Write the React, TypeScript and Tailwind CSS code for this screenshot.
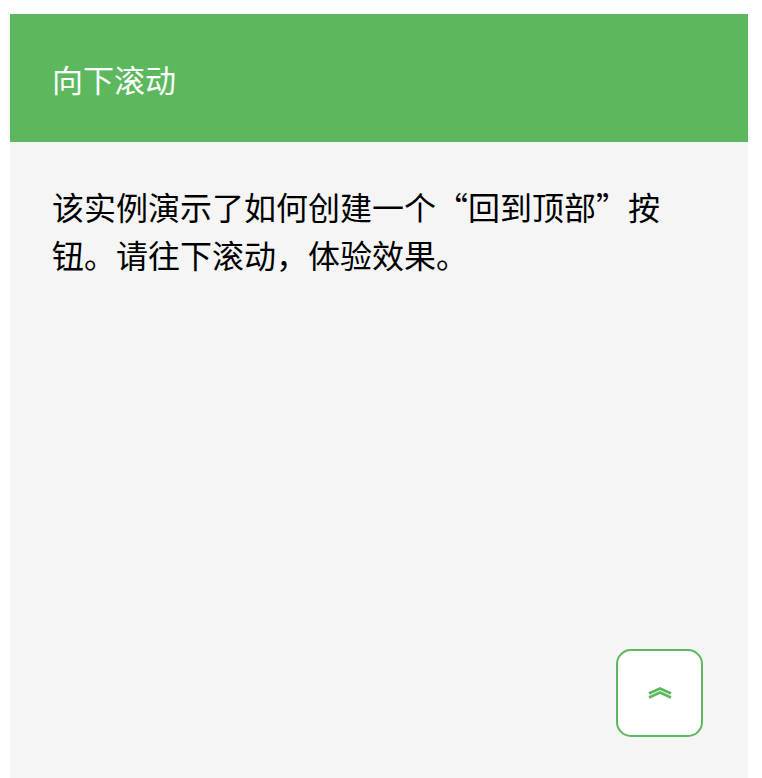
const cjk = {
  fontFamily: '"Noto Sans CJK SC", "Noto Sans", sans-serif',
};

function ChevronsUp() {
  return (
    <svg width="26" height="12" viewBox="0 0 26 12" fill="none">
      <path d="M2 6.5 L13 1.5 L24 6.5" stroke="#5cb85c" strokeWidth="2.6" />
      <path d="M2 10.5 L13 5.5 L24 10.5" stroke="#5cb85c" strokeWidth="2.6" />
    </svg>
  );
}

export default function App() {
  return (
    <div className="h-[778px] bg-white pt-[14px] pl-[10px] pr-[14px]" style={cjk}>
      <div className="relative flex h-full flex-col bg-[#f5f5f5]">
        {/* Header */}
        <div className="flex h-[128px] items-center bg-[#5cb85c] px-[42px]">
          <h1 className="text-[31px] leading-none font-normal text-white">向下滚动</h1>
        </div>

        {/* Content */}
        <div className="px-[42px] pt-[40px]">
          <p className="w-[640px] text-[32px] leading-[48px] text-black">
            该实例演示了如何创建一个“回到顶部”按钮。请往下滚动，体验效果。
          </p>
        </div>

        {/* Back to top */}
        <button className="absolute right-[45px] bottom-[41px] flex h-[88px] w-[87px] items-center justify-center rounded-[15px] border-2 border-[#5cb85c] bg-white">
          <ChevronsUp />
        </button>
      </div>
    </div>
  );
}
